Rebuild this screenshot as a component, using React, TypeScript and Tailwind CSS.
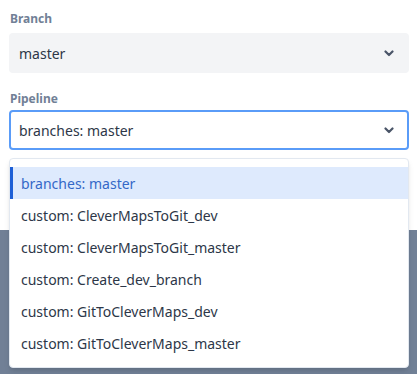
import React from "react";

const Chevron = () => (
  <svg width="10" height="7" viewBox="0 0 10 7" className="shrink-0">
    <polyline points="1.5,1.5 5,5 8.5,1.5" fill="none" stroke="#4a5568" strokeWidth="2.2" strokeLinecap="round" strokeLinejoin="round" />
  </svg>
);

const options = [
  "branches: master",
  "custom: CleverMapsToGit_dev",
  "custom: CleverMapsToGit_master",
  "custom: Create_dev_branch",
  "custom: GitToCleverMaps_dev",
  "custom: GitToCleverMaps_master",
];

export default function App() {
  return (
    <div className="relative w-[417px] h-[374px] bg-[#718096] overflow-hidden" style={{ fontFamily: '"Noto Sans", "Open Sans", sans-serif' }}>
      <div className="bg-white h-[230px] px-[9px] pt-[11px] w-[417px]">
        <div className="text-[12px] leading-4 font-bold text-[#718096] pl-px mb-[6px]">Branch</div>
        <div className="h-10 w-[400px] rounded bg-[#f3f4f6] flex items-center justify-between pl-[10px] pr-[15px] text-[14px] text-[#2d3748]">
          <span>master</span>
          <Chevron />
        </div>
        <div className="text-[12px] leading-4 font-bold text-[#718096] pl-px mt-[18px] mb-[3px]">Pipeline</div>
        <div className="h-10 w-[400px] rounded border-2 border-[#5a9cf8] bg-white flex items-center justify-between pl-[8px] pr-[13px] text-[14px] text-[#2d3748]">
          <span>branches: master</span>
          <Chevron />
        </div>
      </div>
      <div className="absolute left-[9px] top-[158px] w-[400px] bg-white border border-[#e2e8f0] rounded shadow-md py-2">
        {options.map((o, i) =>
          i === 0 ? (
            <div key={o} className="h-8 flex items-center border-l-[3px] border-[#1d5fd6] bg-[#deeafd] pl-[8px] text-[14px] text-[#3468c8]">
              {o}
            </div>
          ) : (
            <div key={o} className="h-8 flex items-center pl-[11px] text-[14px] text-[#2d3748]">
              {o}
            </div>
          )
        )}
      </div>
    </div>
  );
}
